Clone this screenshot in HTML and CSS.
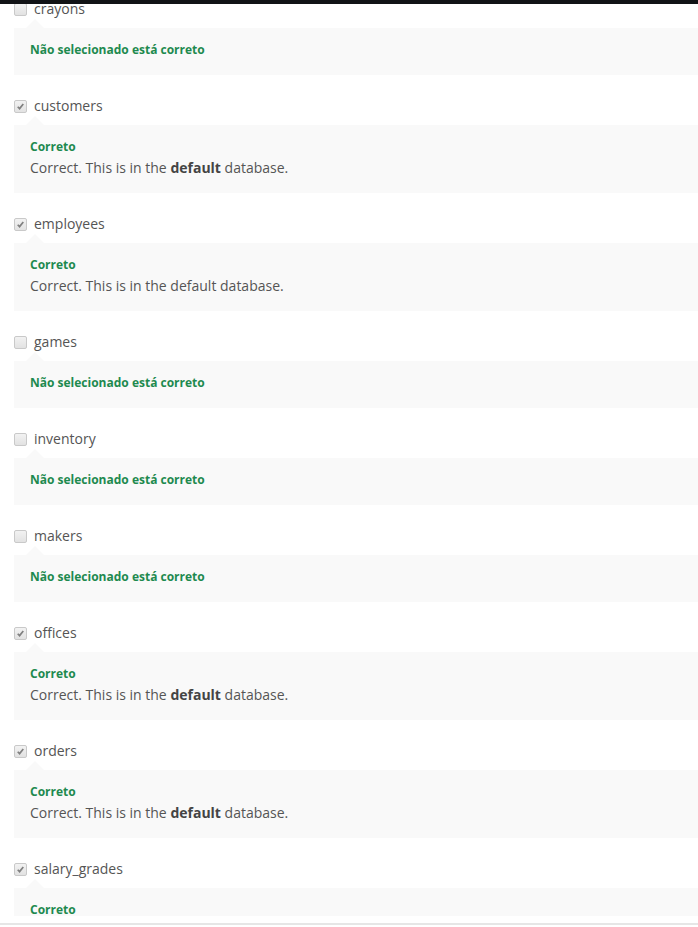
FILE: index.html
```html
<!DOCTYPE html>
<html lang="pt">
<head>
<meta charset="utf-8">
<title>Quiz feedback</title>
<link rel="stylesheet" href="styles.css">
</head>
<body>
<div class="topbar"></div>
<div class="answers">
  <div class="item">
    <div class="choice"><span class="cb"></span><span class="label">crayons</span></div>
    <div class="feedback"><div class="title">Não selecionado está correto</div></div>
  </div>
  <div class="item">
    <div class="choice"><span class="cb checked"><svg viewBox="0 0 13 13"><path d="M3.2 6.8 L5.4 9 L9.8 3.6" /></svg></span><span class="label">customers</span></div>
    <div class="feedback"><div class="title">Correto</div><div class="desc">Correct. This is in the <b>default</b> database.</div></div>
  </div>
  <div class="item">
    <div class="choice"><span class="cb checked"><svg viewBox="0 0 13 13"><path d="M3.2 6.8 L5.4 9 L9.8 3.6" /></svg></span><span class="label">employees</span></div>
    <div class="feedback"><div class="title">Correto</div><div class="desc">Correct. This is in the default database.</div></div>
  </div>
  <div class="item">
    <div class="choice"><span class="cb"></span><span class="label">games</span></div>
    <div class="feedback"><div class="title">Não selecionado está correto</div></div>
  </div>
  <div class="item">
    <div class="choice"><span class="cb"></span><span class="label">inventory</span></div>
    <div class="feedback"><div class="title">Não selecionado está correto</div></div>
  </div>
  <div class="item">
    <div class="choice"><span class="cb"></span><span class="label">makers</span></div>
    <div class="feedback"><div class="title">Não selecionado está correto</div></div>
  </div>
  <div class="item">
    <div class="choice"><span class="cb checked"><svg viewBox="0 0 13 13"><path d="M3.2 6.8 L5.4 9 L9.8 3.6" /></svg></span><span class="label">offices</span></div>
    <div class="feedback"><div class="title">Correto</div><div class="desc">Correct. This is in the <b>default</b> database.</div></div>
  </div>
  <div class="item">
    <div class="choice"><span class="cb checked"><svg viewBox="0 0 13 13"><path d="M3.2 6.8 L5.4 9 L9.8 3.6" /></svg></span><span class="label">orders</span></div>
    <div class="feedback"><div class="title">Correto</div><div class="desc">Correct. This is in the <b>default</b> database.</div></div>
  </div>
  <div class="item">
    <div class="choice"><span class="cb checked"><svg viewBox="0 0 13 13"><path d="M3.2 6.8 L5.4 9 L9.8 3.6" /></svg></span><span class="label">salary_grades</span></div>
    <div class="feedback"><div class="title">Correto</div><div class="desc">Correct. This is in the <b>default</b> database.</div></div>
  </div>
</div>
<div class="footer"><div class="footer-line"></div></div>
</body>
</html>
```
FILE: styles.css
```css
html, body {
  margin: 0;
  padding: 0;
  background: #ffffff;
  overflow: hidden;
  height: 927px;
}
body {
  font-family: "Open Sans", "Noto Sans", sans-serif;
  color: #555555;
  font-size: 14px;
}
.topbar {
  position: fixed;
  top: 0;
  left: 0;
  right: 0;
  height: 4px;
  background: #111316;
  z-index: 5;
}
.answers {
  margin-top: -1px;
  padding-left: 14px;
  display: flex;
  flex-direction: column;
  gap: 21px;
}
.choice {
  display: flex;
  align-items: center;
  height: 20px;
  line-height: 20px;
}
.cb {
  box-sizing: border-box;
  width: 13px;
  height: 13px;
  border: 1px solid #c9c9c9;
  border-radius: 2px;
  background: linear-gradient(#f2f2f2, #e2e2e2);
  margin-right: 7px;
  margin-top: 1px;
  display: flex;
}
.cb svg {
  width: 11px;
  height: 11px;
}
.cb svg path {
  fill: none;
  stroke: #808080;
  stroke-width: 2;
}
.label {
  font-size: 14px;
  color: #555555;
}
.feedback {
  position: relative;
  margin-top: 9px;
  background: #f9f9f9;
  padding: 13px 16px 15px;
}
.feedback::before {
  content: "";
  position: absolute;
  left: 12px;
  top: -9px;
  border-left: 9px solid transparent;
  border-right: 9px solid transparent;
  border-bottom: 9px solid #f9f9f9;
}
.title {
  font-size: 12px;
  font-weight: 700;
  line-height: 17px;
  color: #1e8a4f;
  margin-bottom: 2px;
}
.desc {
  font-size: 14px;
  line-height: 20px;
  color: #555555;
  margin-top: 3px;
}
.desc b {
  font-weight: 700;
  color: #444444;
}
.footer {
  position: fixed;
  left: 0;
  right: 0;
  bottom: 0;
  height: 11px;
  background: #ffffff;
  padding-top: 7px;
  box-sizing: border-box;
  z-index: 5;
}
.footer-line {
  height: 2px;
  background: #e6e6e6;
}
```
